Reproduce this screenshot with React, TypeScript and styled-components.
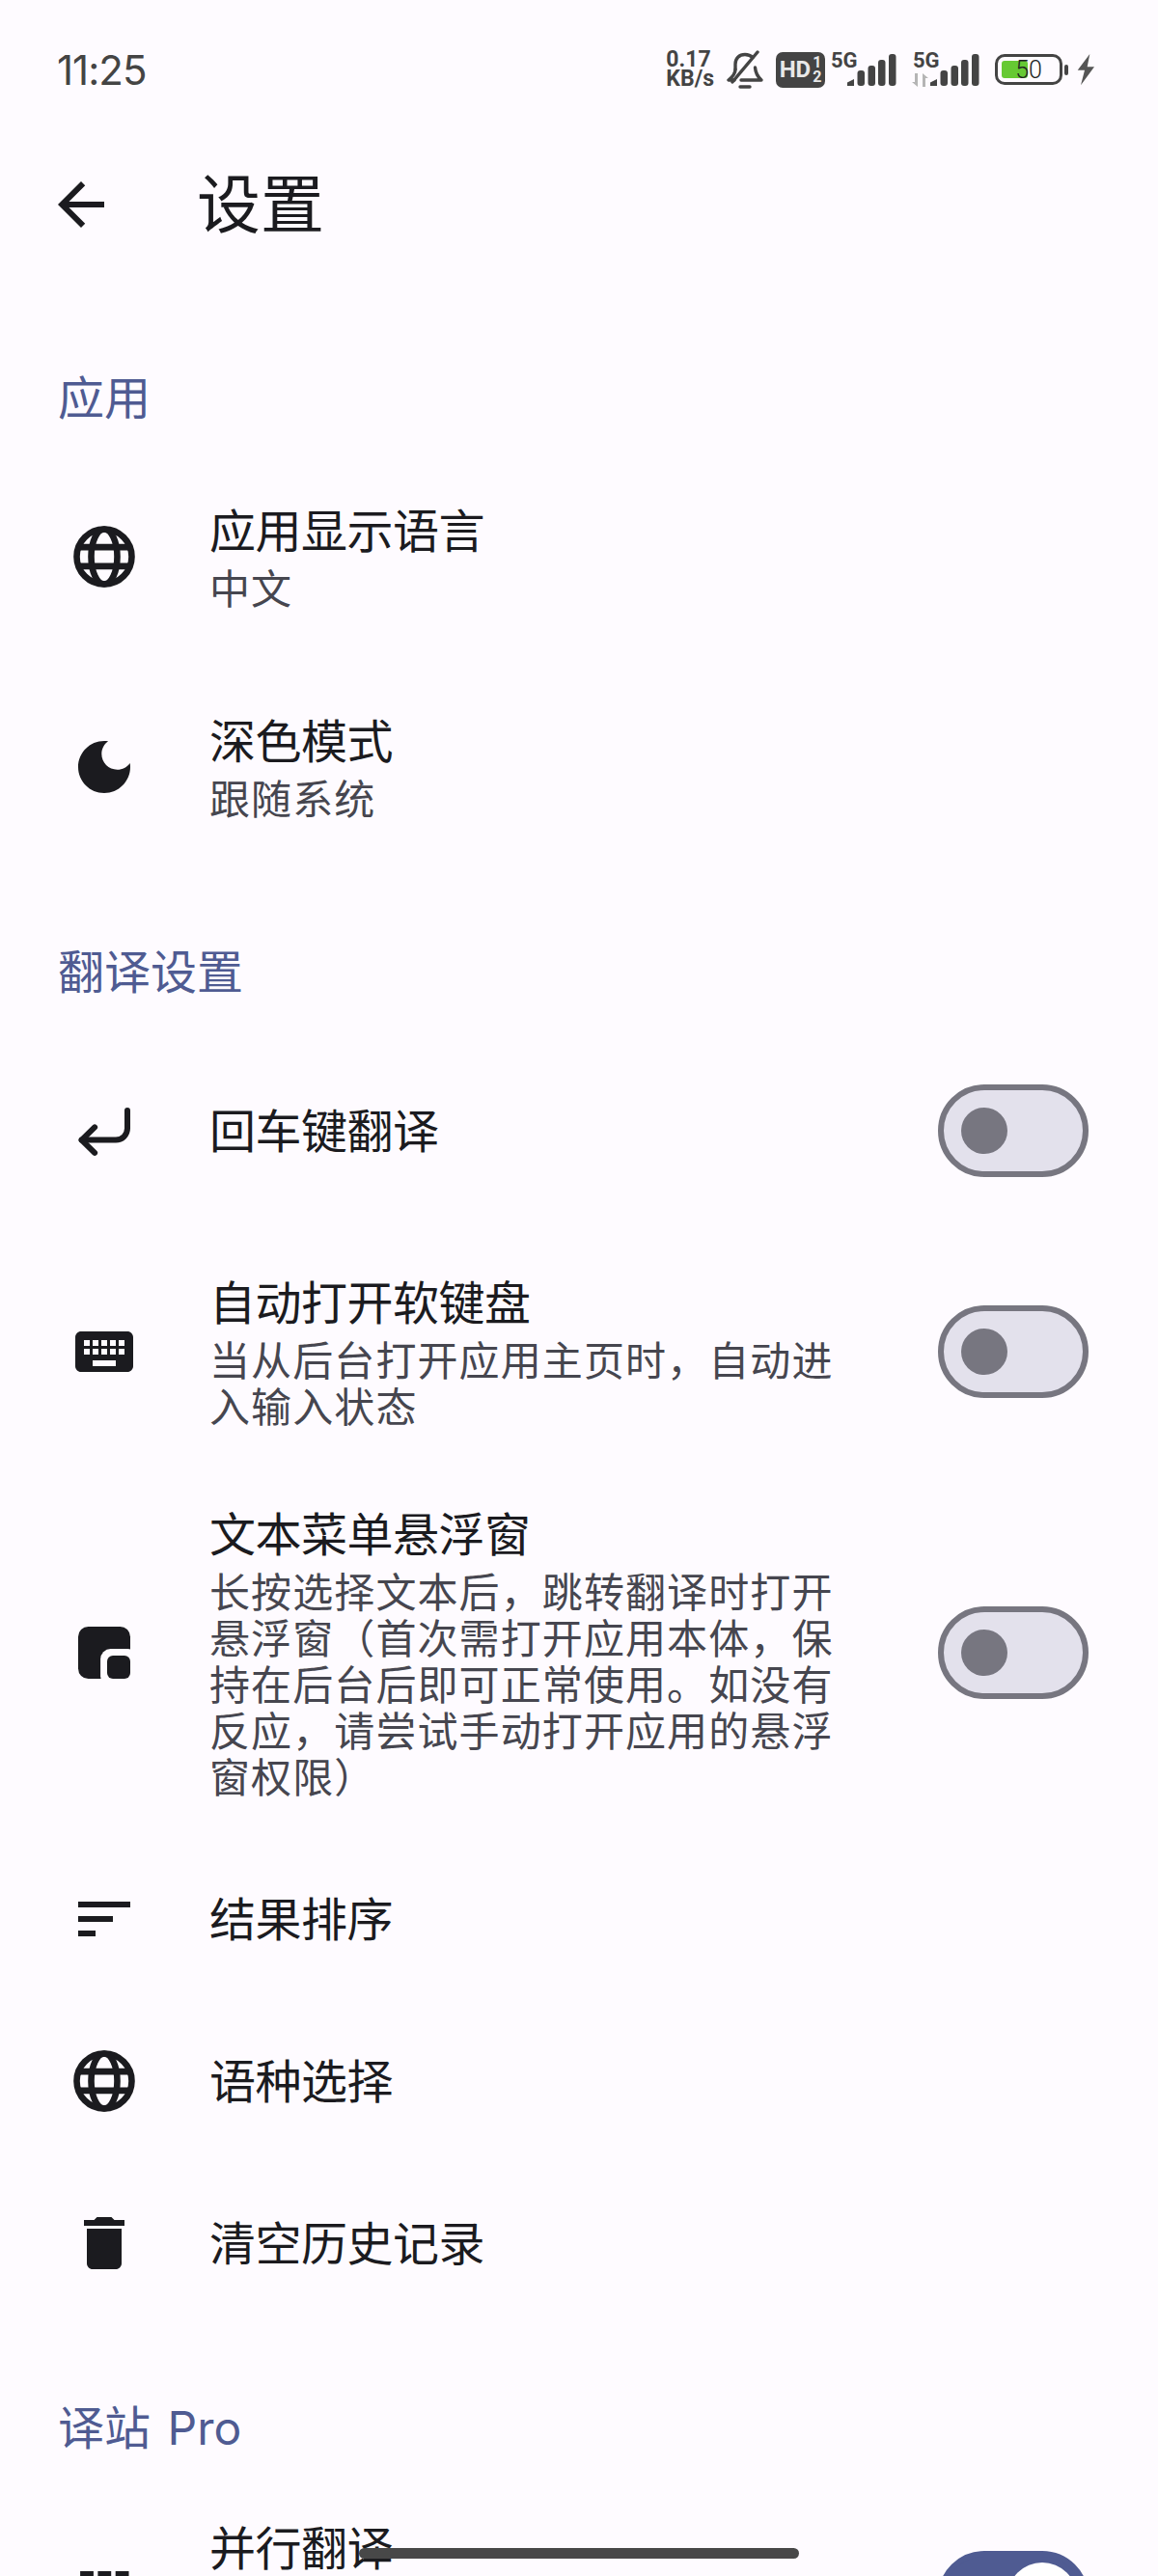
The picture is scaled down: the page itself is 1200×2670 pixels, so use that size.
import React from "react";
import styled, { createGlobalStyle } from "styled-components";

const INK = "#1b1b1f";
const SUB = "#46464f";
const ACCENT = "#4f5b92";
const OUTLINE = "#777680";
const BAR = "#444444";
const BG = "#fefbff";
const CJK = `Roboto, "Noto Sans CJK SC", sans-serif`;

const GlobalStyle = createGlobalStyle`
  html, body {
    margin: 0;
    padding: 0;
    background: ${BG};
  }
`;

const Page = styled.div`
  position: relative;
  width: 1200px;
  height: 2670px;
  overflow: hidden;
  background: ${BG};
  font-family: ${CJK};
`;

const StatusBar = styled.div`
  display: flex;
  align-items: center;
  justify-content: space-between;
  height: 144px;
  padding: 0 66px 0 59px;
  color: ${BAR};
`;
const Time = styled.div`
  font-family: Inter, sans-serif;
  font-size: 42px;
  letter-spacing: -1px;
`;
const StatusIcons = styled.div`
  display: flex;
  align-items: center;
`;
const Speed = styled.div`
  display: flex;
  flex-direction: column;
  font-family: Roboto, sans-serif;
  font-size: 23px;
  font-weight: 700;
  line-height: 20px;
  margin-right: 13px;
`;
const HdBadge = styled.div`
  display: flex;
  align-items: center;
  justify-content: center;
  gap: 2px;
  width: 51px;
  height: 37px;
  margin: 0 6px 0 13px;
  border-radius: 7px;
  background: ${BAR};
  color: #e8e8e8;
  font-family: Roboto, sans-serif;
  font-weight: 700;
  font-size: 24px;
`;
const HdFraction = styled.div`
  display: flex;
  flex-direction: column;
  align-items: center;
  font-size: 16px;
  line-height: 15px;
`;
const SignalBox = styled.div<{ $w: number; $ml: number }>`
  position: relative;
  width: ${(p) => p.$w}px;
  height: 36px;
  margin-left: ${(p) => p.$ml}px;
`;
const FiveG = styled.span<{ $left: number }>`
  position: absolute;
  left: ${(p) => p.$left}px;
  top: 0;
  font-family: Roboto, sans-serif;
  font-size: 22px;
  font-weight: 700;
  line-height: 18px;
`;
const BatteryWrap = styled.div`
  display: flex;
  align-items: center;
  gap: 2px;
  margin: 0 9px 0 16px;
`;
const BatteryBody = styled.div`
  position: relative;
  display: flex;
  align-items: center;
  justify-content: center;
  box-sizing: border-box;
  width: 70px;
  height: 32px;
  border: 3px solid ${BAR};
  border-radius: 10px;
  font-family: Roboto, sans-serif;
  font-size: 25px;
  font-weight: 300;
  color: #222;
`;
const BatteryFill = styled.div`
  position: absolute;
  left: 4px;
  top: 4px;
  width: 27px;
  height: 18px;
  border-radius: 3px;
  background: #66c933;
`;
const BatteryValue = styled.span`
  position: relative;
`;
const BatteryTip = styled.div`
  width: 4px;
  height: 11px;
  border-radius: 2px;
  background: ${BAR};
`;

const Header = styled.header`
  display: flex;
  align-items: center;
  height: 72px;
  margin-top: 32px;
  padding-left: 48px;
  gap: 84px;
`;
const Title = styled.h1`
  margin: 0;
  padding-top: 3px;
  font-size: 66px;
  font-weight: 400;
  line-height: 72px;
  color: ${INK};
`;

const SectionLabel = styled.div<{ $mt: number }>`
  margin: ${(p) => p.$mt}px 0 19px;
  padding-left: 60px;
  font-family: Inter, "Noto Sans CJK SC", sans-serif;
  font-size: 48px;
  line-height: 72px;
  word-spacing: 4px;
  color: ${ACCENT};
`;

const Row = styled.div<{ $tall?: boolean }>`
  display: flex;
  align-items: center;
  box-sizing: border-box;
  min-height: ${(p) => (p.$tall ? 218 : 168)}px;
  padding: 32px 72px;
`;
const IconBox = styled.svg`
  flex: none;
  width: 72px;
  height: 72px;
  margin-right: 73px;
  color: ${INK};
`;
const Texts = styled.div<{ $reserve?: number }>`
  flex: 1;
  min-height: ${(p) => p.$reserve ?? 0}px;
`;
const ItemTitle = styled.div`
  padding-top: 3px;
  font-size: 48px;
  line-height: 72px;
  letter-spacing: -0.5px;
  color: ${INK};
`;
const ItemSub = styled.div`
  width: 656px;
  margin-bottom: 5px;
  font-size: 42px;
  line-height: 48px;
  letter-spacing: 1.1px;
  color: ${SUB};
`;

const SwitchTrack = styled.div<{ $on?: boolean }>`
  flex: none;
  display: flex;
  align-items: center;
  justify-content: ${(p) => (p.$on ? "flex-end" : "flex-start")};
  box-sizing: border-box;
  width: 156px;
  height: 96px;
  padding: 0 ${(p) => (p.$on ? 6 : 18)}px;
  border: 6px solid ${(p) => (p.$on ? ACCENT : OUTLINE)};
  border-radius: 48px;
  background: ${(p) => (p.$on ? ACCENT : "#e3e1ec")};
`;
const SwitchThumb = styled.div<{ $on?: boolean }>`
  width: ${(p) => (p.$on ? 72 : 48)}px;
  height: ${(p) => (p.$on ? 72 : 48)}px;
  border-radius: 50%;
  background: ${(p) => (p.$on ? "#ffffff" : OUTLINE)};
`;

const NavPill = styled.div`
  position: absolute;
  left: 372px;
  bottom: 18px;
  width: 456px;
  height: 11px;
  border-radius: 6px;
  background: #484848;
`;

const SignalBars = styled.svg`
  position: absolute;
  right: 0;
  bottom: 0;
`;
const DataArrows = styled.svg`
  position: absolute;
  left: 0;
  bottom: 0;
`;

function Switch({ on }: { on?: boolean }) {
  return (
    <SwitchTrack $on={on}>
      <SwitchThumb $on={on} />
    </SwitchTrack>
  );
}

function Signal() {
  return (
    <SignalBars width="51" height="34" viewBox="0 0 51 34" fill={BAR}>
      <path d="M0 33v-3.500l7-3.500v7z" />
      <rect x="10.500" y="17" width="7.500" height="16" rx="3" />
      <rect x="21.500" y="12" width="7.500" height="21" rx="3" />
      <rect x="32" y="6" width="7.500" height="27" rx="3" />
      <rect x="43" y="0" width="7.500" height="33" rx="3" />
    </SignalBars>
  );
}

const BackIcon = () => (
  <svg width="72" height="72" viewBox="0 0 24 24" fill={INK}>
    <path d="M20 11H7.83l5.59-5.59L12 4l-8 8 8 8 1.41-1.41L7.83 13H20v-2z" />
  </svg>
);

const GlobeIcon = () => (
  <IconBox viewBox="0 0 24 24" fill="none" stroke="currentColor" strokeWidth="2.2">
    <circle cx="12" cy="12" r="9.5" />
    <ellipse cx="12" cy="12" rx="4.500" ry="9.5" />
    <path d="M3 8.700h18M3 15.300h18" />
  </IconBox>
);

const MoonIcon = () => (
  <IconBox viewBox="0 0 24 24" fill="currentColor">
    <path d="M12 3c-4.97 0-9 4.03-9 9s4.03 9 9 9 9-4.03 9-9c0-.46-.04-.92-.1-1.36-.98 1.37-2.58 2.26-4.4 2.26-2.98 0-5.4-2.42-5.4-5.4 0-1.81.89-3.42 2.26-4.4-.44-.06-.9-.1-1.36-.1z" />
  </IconBox>
);

const ReturnIcon = () => (
  <IconBox viewBox="0 0 24 24" fill="none" stroke="currentColor" strokeWidth="2" strokeLinecap="round" strokeLinejoin="round">
    <path d="M20 5v6.200a4 4 0 0 1-4 4H4.200" />
    <path d="M8.700 10.800 4.200 15.200l4.500 4.400" />
  </IconBox>
);

const KeyboardIcon = () => (
  <IconBox viewBox="0 0 24 24" fill="currentColor">
    <path d="M20 5H4c-1.1 0-1.99.9-1.99 2L2 17c0 1.1.9 2 2 2h16c1.1 0 2-.9 2-2V7c0-1.1-.9-2-2-2zm-9 3h2v2h-2V8zm0 3h2v2h-2v-2zM8 8h2v2H8V8zm0 3h2v2H8v-2zm-1 2H5v-2h2v2zm0-3H5V8h2v2zm9 7H8v-2h8v2zm0-4h-2v-2h2v2zm0-3h-2V8h2v2zm3 3h-2v-2h2v2zm0-3h-2V8h2v2z" />
  </IconBox>
);

const FloatIcon = () => (
  <IconBox viewBox="0 0 24 24" fill="currentColor">
    <rect x="3" y="3" width="18" height="18" rx="3.5" />
    <rect x="10.7" y="10.7" width="13" height="13" rx="3.5" fill={BG} />
    <rect x="13" y="13" width="8" height="8" rx="2" />
  </IconBox>
);

const SortIcon = () => (
  <IconBox viewBox="0 0 24 24" fill="currentColor">
    <path d="M3 18h6v-2H3v2zM3 6v2h18V6H3zm0 7h12v-2H3v2z" />
  </IconBox>
);

const TrashIcon = () => (
  <IconBox viewBox="0 0 24 24" fill="currentColor">
    <path d="M6 19c0 1.1.9 2 2 2h8c1.1 0 2-.9 2-2V7H6v12zM19 4h-3.5l-1-1h-5l-1 1H5v2h14V4z" />
  </IconBox>
);

const ColumnsIcon = () => (
  <IconBox viewBox="0 0 24 24" fill="currentColor">
    <rect x="3.7" y="3" width="4.6" height="18" />
    <rect x="9.8" y="3" width="4.6" height="18" />
    <rect x="15.9" y="3" width="4.6" height="18" />
  </IconBox>
);

export default function App() {
  return (
    <Page>
      <GlobalStyle />
      <StatusBar>
        <Time>11:25</Time>
        <StatusIcons>
          <Speed>
            <span>0.17</span>
            <span>KB/s</span>
          </Speed>
          <svg width="38" height="40" viewBox="0 0 38 40" fill="none" stroke={BAR} strokeWidth="3.4" strokeLinecap="round" strokeLinejoin="round">
            <path d="M27 7.500C25 5.500 22.500 4.500 19 4.500c-6 0-10 4-10 10V20" />
            <path d="M9 20c0 4-2 7-7 11h6" />
            <path d="M15 31h21c-4-3.500-6-7-6.500-13" />
            <path d="M32 2 6 33" />
            <path d="M14 38h10" />
          </svg>
          <HdBadge>
            HD
            <HdFraction>
              <span>1</span>
              <span>2</span>
            </HdFraction>
          </HdBadge>
          <SignalBox $w={68} $ml={0}>
            <FiveG $left={0}>5G</FiveG>
            <Signal />
          </SignalBox>
          <SignalBox $w={71} $ml={15}>
            <FiveG $left={2}>5G</FiveG>
            <DataArrows width="20" height="14" viewBox="0 0 20 14" fill="#b5b5b5">
              <path d="M4 0h3v14L1 9h3zM12 0l6 5h-3v9h-3z" />
            </DataArrows>
            <Signal />
          </SignalBox>
          <BatteryWrap>
            <BatteryBody>
              <BatteryFill />
              <BatteryValue>50</BatteryValue>
            </BatteryBody>
            <BatteryTip />
          </BatteryWrap>
          <svg width="18" height="33" viewBox="0 0 18 33" fill="#555555">
            <path d="M13.300 0 .7 16.700H8L4 32.300 18 13.300H10.700z" />
          </svg>
        </StatusIcons>
      </StatusBar>

      <Header>
        <BackIcon />
        <Title>设置</Title>
      </Header>

      <SectionLabel $mt={129}>应用</SectionLabel>
      <Row $tall>
        <GlobeIcon />
        <Texts>
          <ItemTitle>应用显示语言</ItemTitle>
          <ItemSub>中文</ItemSub>
        </Texts>
      </Row>
      <Row $tall>
        <MoonIcon />
        <Texts>
          <ItemTitle>深色模式</ItemTitle>
          <ItemSub>跟随系统</ItemSub>
        </Texts>
      </Row>

      <SectionLabel $mt={68}>翻译设置</SectionLabel>
      <Row $tall>
        <ReturnIcon />
        <Texts>
          <ItemTitle>回车键翻译</ItemTitle>
        </Texts>
        <Switch />
      </Row>
      <Row>
        <KeyboardIcon />
        <Texts>
          <ItemTitle>自动打开软键盘</ItemTitle>
          <ItemSub>当从后台打开应用主页时，自动进入输入状态</ItemSub>
        </Texts>
        <Switch />
      </Row>
      <Row>
        <FloatIcon />
        <Texts>
          <ItemTitle>文本菜单悬浮窗</ItemTitle>
          <ItemSub>长按选择文本后，跳转翻译时打开悬浮窗（首次需打开应用本体，保持在后台后即可正常使用。如没有反应，请尝试手动打开应用的悬浮窗权限）</ItemSub>
        </Texts>
        <Switch />
      </Row>
      <Row>
        <SortIcon />
        <Texts>
          <ItemTitle>结果排序</ItemTitle>
        </Texts>
      </Row>
      <Row>
        <GlobeIcon />
        <Texts>
          <ItemTitle>语种选择</ItemTitle>
        </Texts>
      </Row>
      <Row>
        <TrashIcon />
        <Texts>
          <ItemTitle>清空历史记录</ItemTitle>
        </Texts>
      </Row>

      <SectionLabel $mt={72}>译站 Pro</SectionLabel>
      <Row>
        <ColumnsIcon />
        <Texts $reserve={176}>
          <ItemTitle>并行翻译</ItemTitle>
        </Texts>
        <Switch on />
      </Row>
      <NavPill />
    </Page>
  );
}
